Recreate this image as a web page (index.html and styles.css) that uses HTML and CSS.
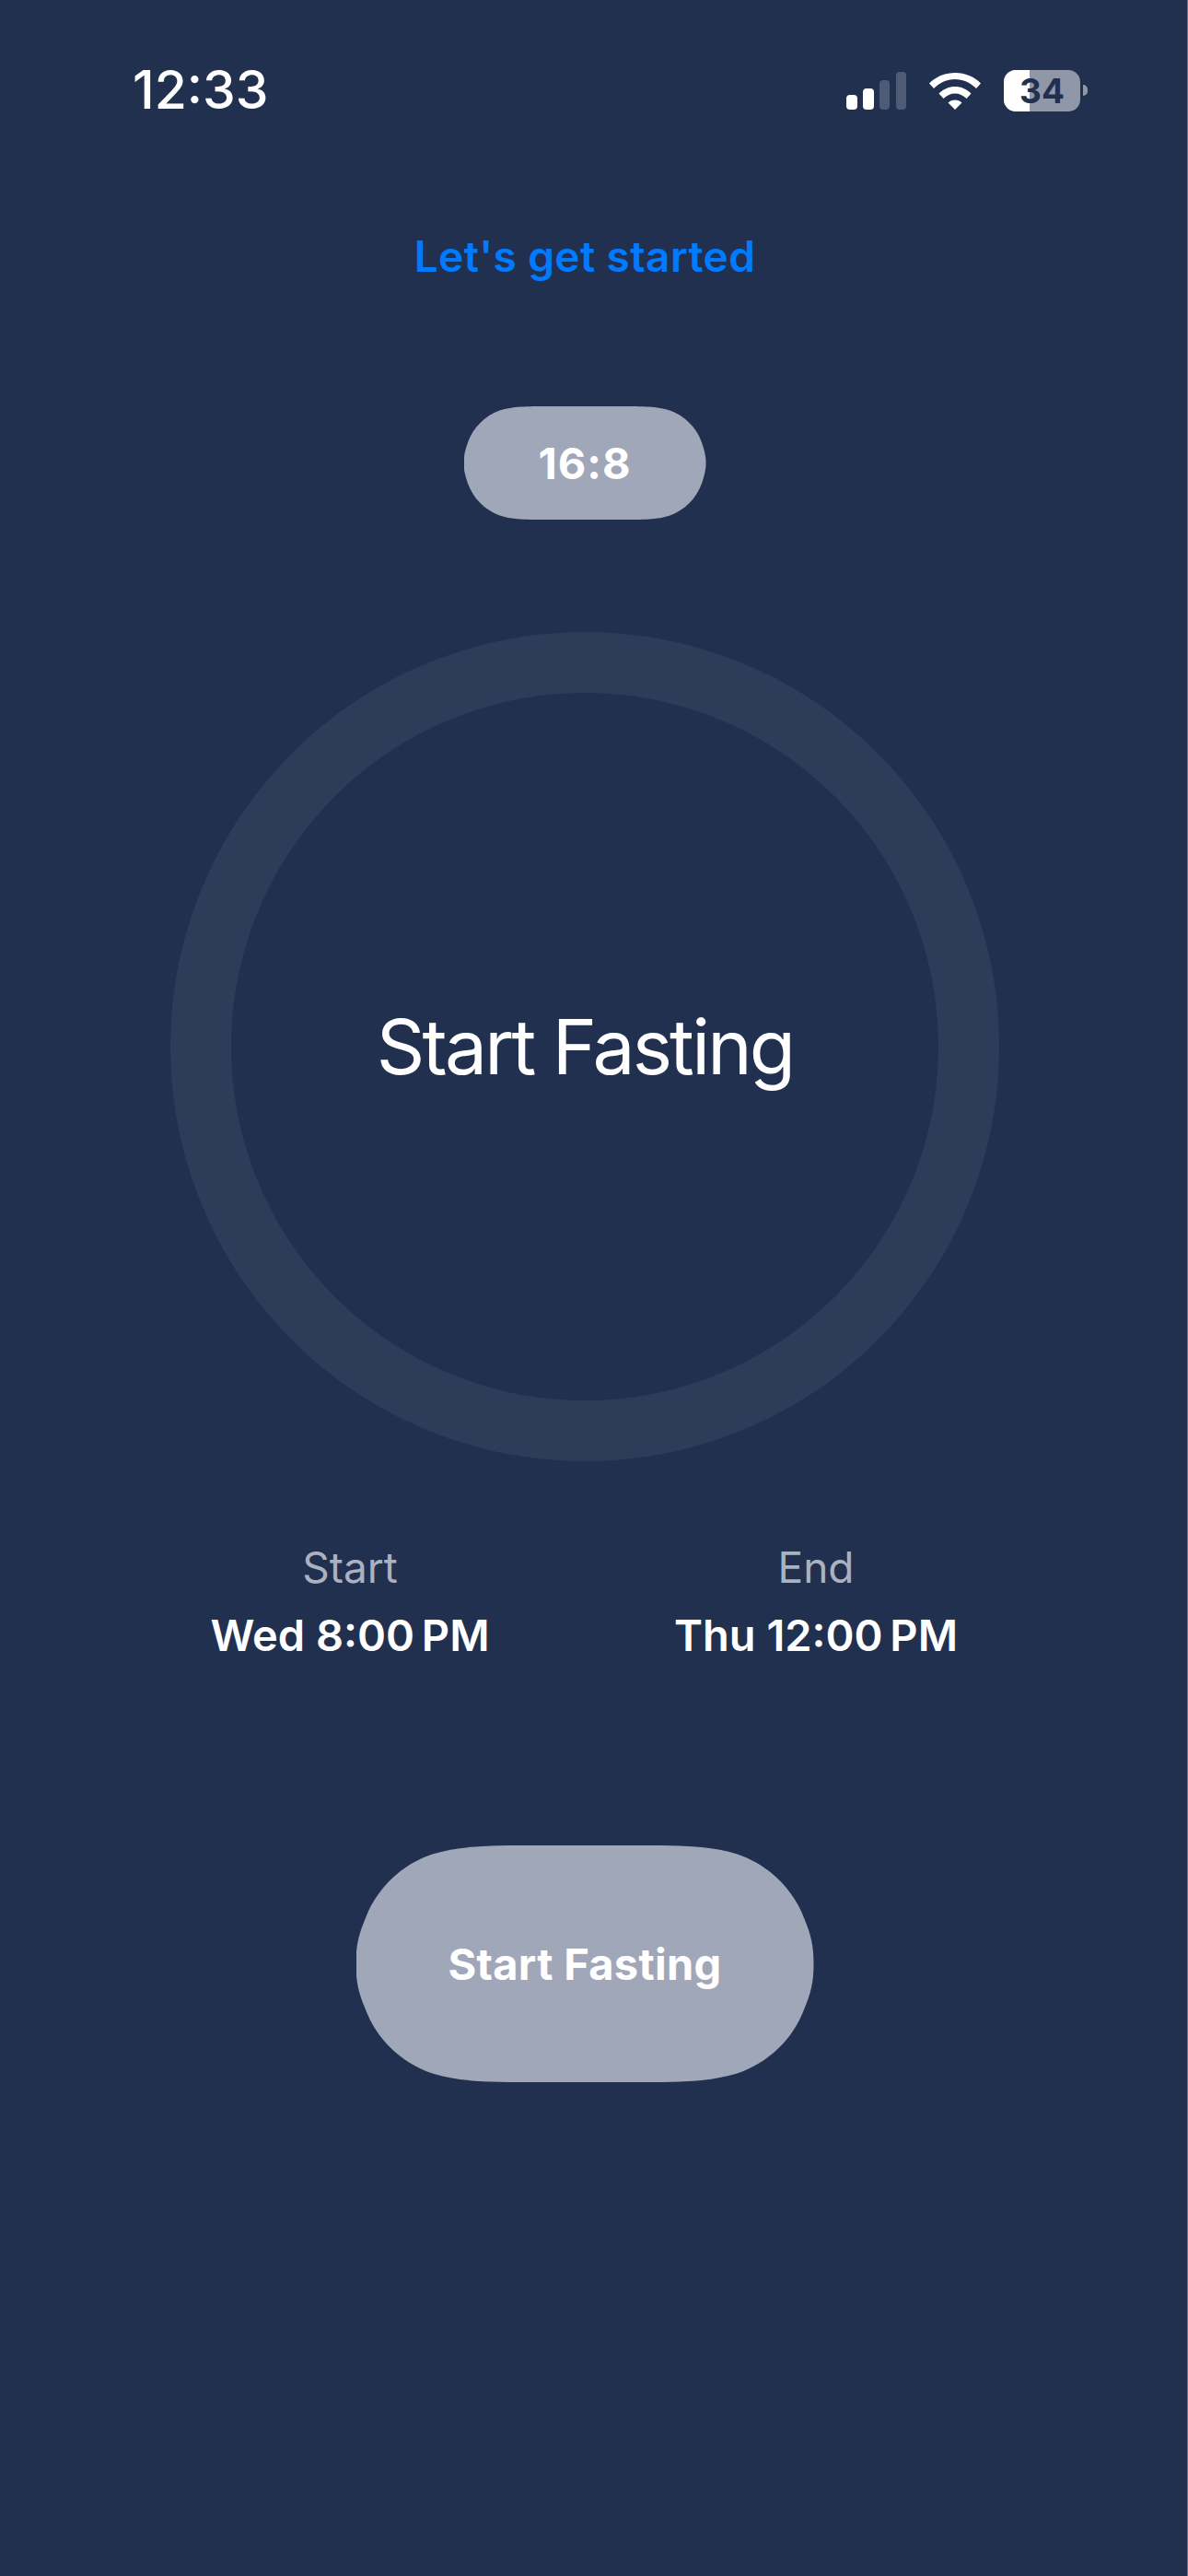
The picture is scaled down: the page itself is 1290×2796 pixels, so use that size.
FILE: index.html
```html
<!DOCTYPE html>
<html lang="en">
<head>
    <meta charset="UTF-8">
    <meta name="viewport" content="width=device-width, initial-scale=1.0">
    <title>Fasting</title>
    <link rel="stylesheet" href="styles.css">
</head>
<body>
    <div class="status-bar">
        <span class="clock">12:33</span>
        <div class="status-icons">
            <svg class="signal" width="65" height="41" viewBox="0 0 65 41">
                <rect x="0" y="25" width="12" height="16" rx="4" fill="#fff"/>
                <rect x="18" y="18" width="12" height="23" rx="4" fill="#fff"/>
                <rect x="36" y="9" width="11" height="32" rx="4" fill="#4f5b76"/>
                <rect x="54" y="0" width="11" height="41" rx="4" fill="#4f5b76"/>
            </svg>
            <svg class="wifi" width="56" height="41" viewBox="0 0 56 41">
                <path d="M0 12.5C7.5 5 17 1 28 1s20.5 4 28 11.5l-5 5.5C44.5 11.5 36.5 8 28 8S11.5 11.5 5 18z" fill="#fff"/>
                <path d="M10.5 23.5C15.5 18.5 21.5 16 28 16s12.5 2.5 17.5 7.5l-5 5.5C37 25.5 32.5 23.5 28 23.5S19 25.5 15.5 29z" fill="#fff"/>
                <path d="M20.5 33.5C22.5 31.5 25 30.5 28 30.5s5.5 1 7.5 3L28 41z" fill="#fff"/>
            </svg>
            <div class="battery">
                <div class="battery-body">
                    <div class="battery-fill"></div>
                    <span class="battery-level">34</span>
                </div>
                <div class="battery-cap"></div>
            </div>
        </div>
    </div>

    <h1 class="title">Let's get started</h1>

    <div class="plan-pill">16:8</div>

    <div class="ring">
        <span class="ring-label">Start Fasting</span>
    </div>

    <div class="times">
        <div class="time-col">
            <span class="time-label">Start</span>
            <span class="time-value">Wed 8:00&#8201;PM</span>
        </div>
        <div class="time-col">
            <span class="time-label">End</span>
            <span class="time-value">Thu 12:00&#8201;PM</span>
        </div>
    </div>

    <button type="button" class="start-button">Start Fasting</button>
</body>
</html>
```

FILE: styles.css
```css
* {
    box-sizing: border-box;
}
html, body {
    margin: 0;
    height: 100%;
}
body {
    width: 1290px;
    height: 2796px;
    overflow: hidden;
    background-color: #22304f;
    color: white;
    font-family: Inter, "Liberation Sans", sans-serif;
    display: flex;
    flex-direction: column;
    align-items: center;
    padding-right: 19px;
    border-right: 1px solid #6f7688;
}
.status-bar {
    width: 100%;
    height: 118px;
    padding: 68px 89px 0 144px;
    display: flex;
    justify-content: space-between;
    align-items: flex-start;
}
.clock {
    font-size: 57px;
    font-weight: 500;
    line-height: 60px;
}
.status-icons {
    display: flex;
    align-items: center;
    gap: 25px;
    height: 50px;
    margin-top: 5px;
}
.battery {
    display: flex;
    align-items: center;
    gap: 3px;
}
.battery-body {
    width: 83px;
    height: 45px;
    border-radius: 13px;
    background-color: #8f97a8;
    overflow: hidden;
    position: relative;
    display: flex;
    justify-content: center;
    align-items: center;
}
.battery-fill {
    position: absolute;
    left: 0;
    top: 0;
    bottom: 0;
    width: 34%;
    background-color: white;
}
.battery-level {
    position: relative;
    font-size: 37px;
    font-weight: 700;
    color: #22304f;
}
.battery-cap {
    width: 5px;
    height: 12px;
    border-radius: 0 6px 6px 0;
    background-color: #8f97a8;
}
.title {
    margin: 135px 0 0;
    font-size: 46px;
    font-weight: 600;
    letter-spacing: 0.4px;
    line-height: 50px;
    color: #007aff;
}
.plan-pill {
    margin-top: 138px;
    width: 263px;
    height: 123px;
    background-color: #a0a7b8;
    clip-path: path("M94 0H169C196 0 209.6 0 224 4.6C240 10.4 252.6 23 258.4 39C261.5 48 263 54 263 61.5C263 69 261.5 75 258.4 84C252.6 100 240 112.6 224 118.4C209.6 123 196 123 169 123H94C67 123 53.4 123 39 118.4C23 112.6 10.4 100 4.6 84C1.5 75 0 69 0 61.5C0 54 1.5 48 4.6 39C10.4 23 23 10.4 39 4.6C53.4 0 67 0 94 0Z");
    display: flex;
    justify-content: center;
    align-items: center;
    font-size: 47px;
    font-weight: 700;
    letter-spacing: 1px;
}
.ring {
    margin-top: 122px;
    width: 900px;
    height: 900px;
    border-radius: 50%;
    border: 66px solid #2e3b59;
    display: flex;
    justify-content: center;
    align-items: center;
}
.ring-label {
    font-size: 82px;
    font-weight: 400;
    letter-spacing: -2.8px;
}
.times {
    margin: 89px 0 0 -4px;
    width: 1012px;
    display: grid;
    grid-template-columns: 1fr 1fr;
}
.time-col {
    display: flex;
    flex-direction: column;
    align-items: center;
    gap: 22px;
}
.time-label {
    font-size: 46px;
    font-weight: 400;
    line-height: 52px;
    color: #abb1bf;
}
.time-value {
    font-size: 47px;
    font-weight: 600;
    line-height: 52px;
}
.start-button {
    margin-top: 202px;
    width: 497px;
    height: 257px;
    border: none;
    padding: 0;
    background-color: #a0a7b8;
    color: white;
    font-family: inherit;
    font-size: 47px;
    font-weight: 700;
    letter-spacing: 0.3px;
    clip-path: path("M202 0H295C353 0 382 0 414 9.5C448 21 475 47 487 80C494 97 497 108 497 128.5C497 149 494 160 487 177C475 210 448 236 414 247.5C382 257 353 257 295 257H202C144 257 115 257 83 247.5C49 236 22 210 10 177C3 160 0 149 0 128.5C0 108 3 97 10 80C22 47 49 21 83 9.5C115 0 144 0 202 0Z");
}
```
